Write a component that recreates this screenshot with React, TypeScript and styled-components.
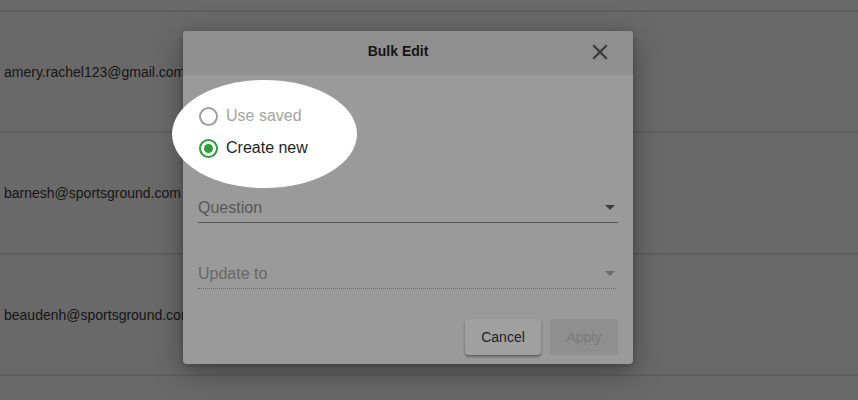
import React from 'react'
import styled, { createGlobalStyle } from 'styled-components'

const GlobalStyle = createGlobalStyle`
  html, body {
    margin: 0;
    padding: 0;
    background: #696969;
    font-family: 'Liberation Sans', Arial, sans-serif;
  }
`

const emails = [
  'amery.rachel123@gmail.com',
  'barnesh@sportsground.com',
  'beaudenh@sportsground.com',
]

const App = () => {
  return (
    <Page>
      <GlobalStyle />
      <RowList>
        {emails.map((email) => (
          <Row key={email}>
            <Email>{email}</Email>
          </Row>
        ))}
        <Row />
      </RowList>

      <Modal>
        <Header>
          <Title>Bulk Edit</Title>
          <CloseButton aria-label='close'>
            <svg width='16' height='16' viewBox='0 0 16 16'>
              <path d='M2 2 L14 14 M14 2 L2 14' stroke='#3a3a3a' strokeWidth='2.2' strokeLinecap='square' />
            </svg>
          </CloseButton>
        </Header>
        <Body>
          <Spotlight />
          <RadioGroup>
            <RadioRow>
              <RadioCircle />
              <RadioLabel muted>Use saved</RadioLabel>
            </RadioRow>
            <RadioRow>
              <RadioCircle checked />
              <RadioLabel>Create new</RadioLabel>
            </RadioRow>
          </RadioGroup>

          <Field top={34}>
            <FieldLabel>Question</FieldLabel>
            <Arrow />
          </Field>
          <Field top={41} disabled>
            <FieldLabel disabled>Update to</FieldLabel>
            <Arrow disabled />
          </Field>

          <Actions>
            <Button>Cancel</Button>
            <Button disabled>Apply</Button>
          </Actions>
        </Body>
      </Modal>
    </Page>
  )
}

const Page = styled.div`
  position: relative;
  width: 858px;
  height: 400px;
  overflow: hidden;
  background: #696969;
`

const RowList = styled.div`
  padding-top: 10px;
`

const Row = styled.div`
  height: 121px;
  border-top: 2px solid #5f5f5f;
  display: flex;
  align-items: center;
  padding-left: 4px;
  box-sizing: border-box;
  &:nth-child(2) {
    height: 122px;
  }
`

const Email = styled.span`
  font-size: 14px;
  color: #151515;
`

const Modal = styled.div`
  position: absolute;
  left: 183px;
  top: 31px;
  width: 450px;
  height: 333px;
  border-radius: 4px;
  background: #9a9a9a;
  box-shadow: 0 8px 30px rgba(0, 0, 0, 0.35), 0 2px 6px rgba(0, 0, 0, 0.2);
  display: flex;
  flex-direction: column;
`

const Header = styled.div`
  height: 44px;
  flex-shrink: 0;
  background: #8f8f8f;
  border-radius: 4px 4px 0 0;
  display: flex;
  align-items: center;
  justify-content: center;
  position: relative;
`

const Title = styled.div`
  font-size: 14px;
  font-weight: bold;
  color: #151515;
  margin-top: -4px;
  padding-right: 20px;
`

const CloseButton = styled.div`
  position: absolute;
  right: 25px;
  top: 13px;
  width: 16px;
  height: 16px;
  display: flex;
`

const Body = styled.div`
  position: relative;
  flex: 1;
  padding: 25px 15px 9px 15px;
  display: flex;
  flex-direction: column;
`

const Spotlight = styled.div`
  position: absolute;
  left: -11px;
  top: 5px;
  width: 185px;
  height: 108px;
  border-radius: 50%;
  background: #ffffff;
`

const RadioGroup = styled.div`
  position: relative;
  z-index: 1;
  display: flex;
  flex-direction: column;
  padding-left: 1px;
`

const RadioRow = styled.div`
  height: 32px;
  display: flex;
  align-items: center;
`

const RadioCircle = styled.span<{ checked?: boolean }>`
  width: 19px;
  height: 19px;
  box-sizing: border-box;
  border-radius: 50%;
  border: 2px solid ${(p) => (p.checked ? '#2e9c3a' : '#9e9e9e')};
  display: flex;
  align-items: center;
  justify-content: center;
  margin-right: 8px;
  &::after {
    content: '';
    width: 9px;
    height: 9px;
    border-radius: 50%;
    background: ${(p) => (p.checked ? '#2e9c3a' : 'transparent')};
  }
`

const RadioLabel = styled.span<{ muted?: boolean }>`
  font-size: 16px;
  color: ${(p) => (p.muted ? '#a3a3a3' : '#1e1e1e')};
`

const Field = styled.div<{ top: number; disabled?: boolean }>`
  margin-top: ${(p) => p.top}px;
  padding-bottom: 5px;
  box-sizing: border-box;
  height: 25px;
  border-bottom: 1px ${(p) => (p.disabled ? 'dotted #666' : 'solid #525252')};
  margin-right: ${(p) => (p.disabled ? '2px' : '0')};
  display: flex;
  align-items: flex-start;
  justify-content: space-between;
`

const FieldLabel = styled.span<{ disabled?: boolean }>`
  font-size: 16px;
  line-height: 19px;
  color: ${(p) => (p.disabled ? '#676767' : '#575757')};
`

const Arrow = styled.span<{ disabled?: boolean }>`
  width: 0;
  height: 0;
  margin-top: 7px;
  margin-right: ${(p) => (p.disabled ? '1px' : '3px')};
  border-left: 5px solid transparent;
  border-right: 5px solid transparent;
  border-top: 5px solid ${(p) => (p.disabled ? '#6e6e6e' : '#3e3e3e')};
`

const Actions = styled.div`
  margin-top: auto;
  display: flex;
  justify-content: flex-end;
  gap: 9px;
`

const Button = styled.div<{ disabled?: boolean }>`
  height: 36px;
  padding: 0 16px;
  box-sizing: border-box;
  display: flex;
  align-items: center;
  justify-content: center;
  border-radius: 4px;
  font-size: 14px;
  color: ${(p) => (p.disabled ? '#7b7b7b' : '#222')};
  background: ${(p) => (p.disabled ? '#8f8f8f' : '#a0a0a0')};
  box-shadow: ${(p) =>
    p.disabled ? 'none' : '0 2px 3px rgba(0, 0, 0, 0.3), 0 1px 1px rgba(0, 0, 0, 0.15)'};
  width: ${(p) => (p.disabled ? '68px' : '76px')};
`

export default App
